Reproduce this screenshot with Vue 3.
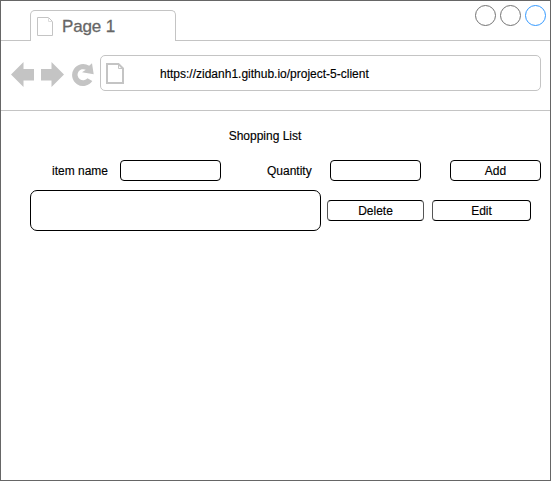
<script setup>
const url = 'https://zidanh1.github.io/project-5-client'
const controls = ['grey', 'grey', 'blue']
</script>

<template>
  <div class="window">
    <header class="tabs">
      <div class="edge"></div>
      <div class="tab">
        <svg class="page-icon" width="16" height="19" viewBox="0 0 16 19">
          <path d="M0.5 0.5H11.5L15.5 4.5V18.5H0.5Z" />
          <path class="fold" d="M11.5 0.5V4.5H15.5" />
        </svg>
        <span class="tab-title">Page 1</span>
      </div>
      <div class="controls">
        <i v-for="(c, i) in controls" :key="i" class="control" :class="c"></i>
      </div>
    </header>
    <nav class="toolbar">
      <svg class="nav-icons" width="84" height="26" viewBox="0 0 84 26">
        <path d="M0 12.5L12.5 0V7H23V18.500H12.500V25Z" />
        <path d="M53 12.500L40.500 0V7H30V18.500H40.500V25Z" />
        <path
          d="M81 1.200L82.700 12.200L71 10.200L74.800 7.800A5.600 5.600 0 1 0 76.500 16.300L81.300 19A11 11 0 1 1 78.200 3.800Z"
        />
      </svg>
      <div class="address">
        <svg class="doc-icon" width="18" height="21" viewBox="0 0 18 21">
          <path d="M1 1H12.500L17 5.500V20H1Z" />
          <path class="fold" d="M12.500 1V5.500H17" />
        </svg>
        <span class="url">{{ url }}</span>
      </div>
    </nav>
    <main class="content">
      <h1 class="title">Shopping List</h1>
      <form class="form" @submit.prevent>
        <label class="name-label" for="name">item name</label>
        <input id="name" class="box name" />
        <label class="qty-label" for="qty">Quantity</label>
        <input id="qty" class="box qty" />
        <button class="box add">Add</button>
      </form>
      <div class="item">
        <div class="entry"></div>
        <button class="box delete">Delete</button>
        <button class="box edit">Edit</button>
      </div>
    </main>
  </div>
</template>

<style>
body {
  background: #fff;
}
</style>

<style scoped>
.window {
  box-sizing: border-box;
  width: 551px;
  height: 481px;
  border: 1px solid #666;
  background: #fff;
  color: #000;
  font: 12px/14px "Liberation Sans", Arial, sans-serif;
  -webkit-text-stroke: 0.15px currentColor;
  overflow: hidden;
}
.window * {
  box-sizing: border-box;
}
.tabs {
  display: flex;
  height: 40px;
}
.edge {
  width: 29px;
  border-bottom: 1px solid #c4c4c4;
}
.tab {
  display: flex;
  width: 146px;
  margin-top: 9px;
  padding: 6px 0 0 6px;
  border: 1px solid #c4c4c4;
  border-bottom: 0;
  border-radius: 5px 5px 0 0;
}
.page-icon path {
  fill: none;
  stroke: #c4c4c4;
}
.page-icon .fold {
  stroke: #dcdcdc;
}
.tab-title {
  margin-left: 9px;
  color: #666;
  font-size: 17px;
  line-height: 20px;
  letter-spacing: -0.15px;
  -webkit-text-stroke: 0.3px #666;
}
.controls {
  display: flex;
  flex: 1;
  justify-content: flex-end;
  gap: 4px;
  padding: 4px 4px 0 0;
  border-bottom: 1px solid #c4c4c4;
}
.control {
  width: 21px;
  height: 21px;
  border: 1px solid #737373;
  border-radius: 50%;
}
.control.blue {
  border-color: #3399ff;
}
.toolbar {
  display: flex;
  height: 70px;
  padding: 14px 0 0 10px;
  border-bottom: 1px solid #c4c4c4;
}
.nav-icons {
  margin: 7px 5px 0 0;
  fill: #c4c4c4;
}
.address {
  display: flex;
  width: 441px;
  height: 36px;
  padding: 7px 0 0 5px;
  border: 1px solid #c4c4c4;
  border-radius: 5px;
}
.doc-icon {
  fill: none;
  stroke: #c4c4c4;
  stroke-width: 2;
}
.doc-icon .fold {
  stroke-width: 1;
}
.url {
  margin: 4px 0 0 36px;
}
.content {
  padding-top: 18px;
}
.title {
  margin: 0;
  padding-right: 21px;
  font: inherit;
  text-align: center;
}
.form {
  display: flex;
  align-items: center;
  margin-top: 17px;
}
.name-label {
  width: 68px;
  margin-left: 51px;
}
.qty-label {
  width: 63px;
  margin-left: 46px;
}
.box {
  height: 21px;
  margin: 0;
  padding: 0;
  border: 1px solid #000;
  border-radius: 4px;
  background: #fff;
  color: #000;
  font: inherit;
  text-align: center;
}
.name {
  width: 101px;
}
.qty {
  width: 91px;
}
.add {
  width: 91px;
  margin-left: 29px;
}
.item {
  display: flex;
  align-items: center;
  margin: 9px 0 0 29px;
}
.entry {
  width: 291px;
  height: 41px;
  border: 1px solid #000;
  border-radius: 7px;
}
.delete {
  width: 97px;
  margin-left: 6px;
  border-left-color: #555;
  border-right-color: #555;
}
.edit {
  width: 99px;
  margin-left: 8px;
  border-left-color: #555;
}
</style>
